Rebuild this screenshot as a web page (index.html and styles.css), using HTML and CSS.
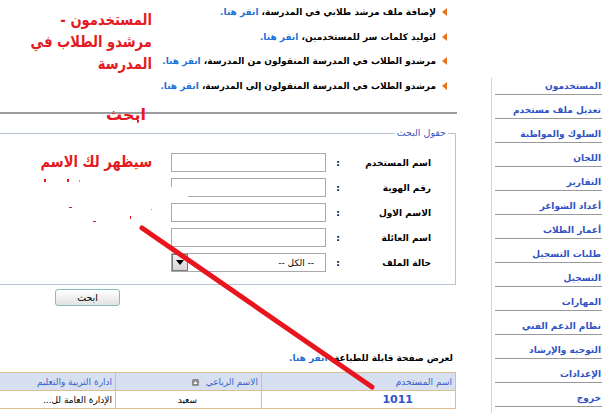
FILE: index.html
```html
<!DOCTYPE html>
<html lang="ar" dir="rtl">
<head>
<meta charset="utf-8">
<link rel="stylesheet" href="styles.css">
</head>
<body>
<div class="page">
  <aside class="sidebar">
    <a class="nav-item first">المستخدمون</a>
    <a class="nav-item">تعديل ملف مستخدم</a>
    <a class="nav-item">السلوك والمواظبة</a>
    <a class="nav-item">اللجان</a>
    <a class="nav-item">التقارير</a>
    <a class="nav-item">أعداد الشواغر</a>
    <a class="nav-item">أعمار الطلاب</a>
    <a class="nav-item">طلبات التسجيل</a>
    <a class="nav-item">التسجيل</a>
    <a class="nav-item">المهارات</a>
    <a class="nav-item">نظام الدعم الفني</a>
    <a class="nav-item">التوجيه والإرشاد</a>
    <a class="nav-item">الإعدادات</a>
    <a class="nav-item">خروج</a>
  </aside>

  <main class="main">
    <ul class="actions">
      <li><span class="arrow"></span><span>لإضافة ملف مرشد طلابي في المدرسة، <a class="link">انقر هنا.</a></span></li>
      <li><span class="arrow"></span><span>لتوليد كلمات سر للمستخدمين، <a class="link">انقر هنا.</a></span></li>
      <li><span class="arrow"></span><span>مرشدو الطلاب في المدرسة المنقولون من المدرسة، <a class="link">انقر هنا.</a></span></li>
      <li><span class="arrow"></span><span>مرشدو الطلاب في المدرسة المنقولون إلى المدرسة، <a class="link">انقر هنا.</a></span></li>
    </ul>

    <div class="rule"></div>

    <fieldset class="search">
      <legend>حقول البحث</legend>
      <div class="row"><label>اسم المستخدم</label><span class="colon">:</span><span class="input"></span></div>
      <div class="row"><label>رقم الهوية</label><span class="colon">:</span><span class="input broken"></span></div>
      <div class="row"><label>الاسم الاول</label><span class="colon">:</span><span class="input"></span></div>
      <div class="row"><label>اسم العائلة</label><span class="colon">:</span><span class="input"></span></div>
      <div class="row"><label>حالة الملف</label><span class="colon">:</span><span class="input select"><span class="opt">-- الكل --</span><span class="drop"><svg width="8" height="5" viewBox="0 0 8 5"><path d="M0 0H8L4 5Z" fill="#000"/></svg></span></span></div>
    </fieldset>

    <div class="btn-row"><span class="btn">ابحث</span></div>

    <p class="print">لعرض صفحة قابلة للطباعة، <a class="link">انقر هنا.</a></p>

    <table class="grid">
      <thead>
        <tr><th class="c1">اسم المستخدم</th><th class="c2">الاسم الرباعي <span class="sort"><svg width="7" height="7" viewBox="0 0 7 7"><rect width="7" height="7" rx="1.5" fill="#8a8a8a"/><path d="M1.5 5H5.5L3.5 2Z" fill="#fff"/></svg></span></th><th class="c3">ادارة التربية والتعليم</th></tr>
      </thead>
      <tbody>
        <tr><td class="c1 uid">1011</td><td class="c2 nm">سعيد</td><td class="c3">الإدارة العامة لل...</td></tr>
      </tbody>
    </table>
  </main>

  <div class="note note-title">المستخدمون -<br>مرشدو الطلاب في<br>المدرسة</div>
  <div class="note note-search">ابحث</div>
  <div class="note note-name">سيظهر لك الاسم</div>
  <svg class="pointer" width="607" height="413" viewBox="0 0 607 413">
    <line x1="142" y1="228" x2="372" y2="387" stroke="#e8141e" stroke-width="5" stroke-linecap="round"/>
    <g fill="#e8141e">
      <rect x="44" y="179" width="2" height="3"/>
      <rect x="67" y="179" width="2" height="3"/>
      <rect x="79" y="180" width="1" height="2" fill="#f08090"/>
      <rect x="69" y="207" width="3" height="1"/>
      <rect x="93" y="221" width="3" height="1"/>
      <rect x="130" y="216" width="1" height="3"/>
      <rect x="151" y="209" width="1" height="1" fill="#f08090"/>
      <rect x="137" y="120" width="2" height="2"/>
    </g>
  </svg>
</div>
</body>
</html>
```

FILE: styles.css
```css
html, body {
  margin: 0;
  padding: 0;
  background: #fff;
}
body {
  width: 607px;
  height: 413px;
  overflow: hidden;
  font-family: "DejaVu Sans", sans-serif;
  font-size: 9px;
}
.page {
  position: relative;
  width: 607px;
  height: 413px;
  display: flex;
  flex-direction: row;
  direction: rtl;
}
.sidebar {
  width: 116px;
  flex: none;
  margin-top: 78px;
  border-left: 1px solid #d4d4d4;
  display: flex;
  flex-direction: column;
  padding: 0 5px 0 3px;
  box-sizing: border-box;
}
.nav-item {
  display: flex;
  align-items: flex-end;
  height: 24px;
  box-sizing: border-box;
  padding: 0 1px 3px 0;
  border-bottom: 1px solid #9a9a9a;
  color: #2f52c4;
  font-weight: bold;
  font-size: 9px;
  white-space: nowrap;
}
.nav-item.first { height: 17px; }

.main {
  width: 491px;
  flex: none;
  display: flex;
  flex-direction: column;
}
.actions {
  list-style: none;
  margin: 0 44px 0 0;
  padding: 0;
}
.actions li {
  height: 24.5px;
  display: flex;
  align-items: center;
  gap: 6px;
  font-weight: bold;
  color: #000;
  white-space: nowrap;
}
.arrow {
  width: 0;
  height: 0;
  border-top: 4px solid transparent;
  border-bottom: 4px solid transparent;
  border-right: 5px solid #e8731c;
  flex: none;
}
.link { color: #1f6fd6; font-weight: bold; }

.rule {
  margin: 14px 34px 0 0;
  height: 2px;
  background: #9c9c9c;
}
.search {
  margin: 13px 35px 0 -10px;
  padding: 11px 0 0 0;
  border: 1px solid #b8c3d6;
  height: 158px;
  box-sizing: border-box;
  min-width: 0;
}
.search legend {
  color: #3858c4;
  padding: 0 2px;
  margin-right: 7px;
  font-size: 9.5px;
  line-height: 12px;
}
.row {
  display: flex;
  align-items: center;
  height: 25px;
  padding-right: 24px;
}
.row label {
  width: 87px;
  font-weight: bold;
  color: #000;
  white-space: nowrap;
}
.colon {
  width: 18px;
  font-weight: bold;
  text-align: center;
  padding-left: 6px;
  box-sizing: border-box;
}
.input {
  width: 155px;
  height: 19px;
  box-sizing: border-box;
  border: 1px solid #a9a9a9;
  background: #fff;
  position: relative;
}
.input.broken::after {
  content: "";
  position: absolute;
  left: -1px;
  bottom: -1px;
  width: 17px;
  height: 10px;
  background: #fff;
}
.select {
  display: flex;
  align-items: center;
  justify-content: space-between;
}
.opt { padding-right: 11px; color: #000; }
.drop {
  width: 16px;
  height: 17px;
  box-sizing: border-box;
  border: 1px solid #7a7a7a;
  background: linear-gradient(#f2f2f2, #d6d6d6);
  display: flex;
  align-items: center;
  justify-content: center;
}
.btn-row {
  display: flex;
  justify-content: flex-end;
  margin: 4px 0 0 0;
  padding-left: 55px;
}
.btn {
  width: 65px;
  height: 17px;
  box-sizing: border-box;
  border: 1px solid #86bcbc;
  border-radius: 3px;
  background: linear-gradient(#ffffff, #e2e2e2);
  display: flex;
  align-items: center;
  justify-content: center;
  font-size: 9.5px;
  color: #000;
}
.print {
  margin: 45px 38px 0 0;
  font-weight: bold;
  color: #000;
  height: 14px;
  line-height: 14px;
  white-space: nowrap;
}
.grid {
  margin: 7px 35px 0 0;
  margin-left: -10px;
  width: 466px;
  table-layout: fixed;
  border-collapse: collapse;
  font-size: 9px;
}
.grid th {
  background: #d6e0f1;
  color: #3a5fc6;
  font-weight: normal;
  text-align: right;
  height: 18px;
  padding: 0 3px;
  border: 1px solid #dcbf8c;
  white-space: nowrap;
  overflow: hidden;
  box-sizing: border-box;
}
.grid td {
  height: 18px;
  padding: 0 3px;
  text-align: right;
  border: 1px solid #dcbf8c;
  border-top: none;
  white-space: nowrap;
  overflow: hidden;
  box-sizing: border-box;
}
.grid .c1 { width: 194px; }
.grid .c2 { width: 146px; }
.grid .c3 { width: 126px; }
.grid .uid { color: #2f55c8; font-weight: bold; font-size: 11px; padding-right: 42px; }
.grid .nm { padding-right: 64px; }
.sort { display: inline-block; vertical-align: middle; margin-right: 4px; }
.sort svg { display: block; }

.note {
  position: absolute;
  color: #e31b23;
  font-weight: bold;
  font-size: 16px;
  line-height: 22px;
  white-space: nowrap;
  text-align: right;
  transform: scaleX(0.82);
  transform-origin: right center;
}
.note-title { right: 455px; top: 9px; }
.note-search { right: 461px; top: 104px; transform: none; }
.note-name { right: 455px; top: 151px; }
.pointer {
  position: absolute;
  left: 0;
  top: 0;
  pointer-events: none;
}
```
